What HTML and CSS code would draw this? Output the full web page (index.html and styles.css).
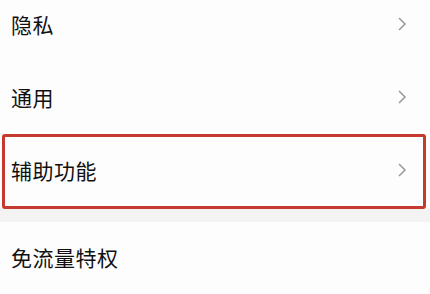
FILE: index.html
```html
<!DOCTYPE html>
<html lang="zh-CN">
<head>
  <meta charset="UTF-8">
  <meta name="viewport" content="width=device-width, initial-scale=1.0">
  <title>设置</title>
  <link rel="stylesheet" href="styles.css">
</head>
<body>
  <div class="settings">
    <div class="setting-group">
      <div class="setting-row">
        <span class="setting-label">隐私</span>
        <svg class="chevron" viewBox="0 0 10 16"><path d="M2 2l6 6-6 6"/></svg>
      </div>
      <div class="setting-row">
        <span class="setting-label">通用</span>
        <svg class="chevron" viewBox="0 0 10 16"><path d="M2 2l6 6-6 6"/></svg>
      </div>
      <div class="setting-row highlighted">
        <span class="setting-label">辅助功能</span>
        <svg class="chevron" viewBox="0 0 10 16"><path d="M2 2l6 6-6 6"/></svg>
      </div>
    </div>

    <div class="setting-group">
      <div class="setting-row">
        <span class="setting-label">免流量特权</span>
      </div>
    </div>
  </div>
</body>
</html>
```

FILE: styles.css
```css
body {
  margin: 0;
  width: 430px;
  height: 294px;
  overflow: hidden;
  background-color: #f3f3f3;
  font-family: "Noto Sans CJK SC", "Noto Sans", sans-serif;
}

.settings {
  margin-top: -11px;
  display: flex;
  flex-direction: column;
  gap: 14px;
}

.setting-group {
  background: #fdfdfd;
}

.setting-row {
  position: relative;
  display: flex;
  align-items: center;
  justify-content: space-between;
  box-sizing: border-box;
  height: 73px;
  padding: 0 23px 4px 11px;
}

.setting-label {
  font-size: 21px;
  color: #111;
  letter-spacing: 0.5px;
}

.chevron {
  width: 10px;
  height: 16px;
  fill: none;
  stroke: #999;
  stroke-width: 1.5;
}

.highlighted::after {
  content: "";
  position: absolute;
  left: 2px;
  right: 4px;
  top: -1px;
  bottom: -1px;
  border: 3px solid #c5392f;
  border-radius: 3px;
}
```
